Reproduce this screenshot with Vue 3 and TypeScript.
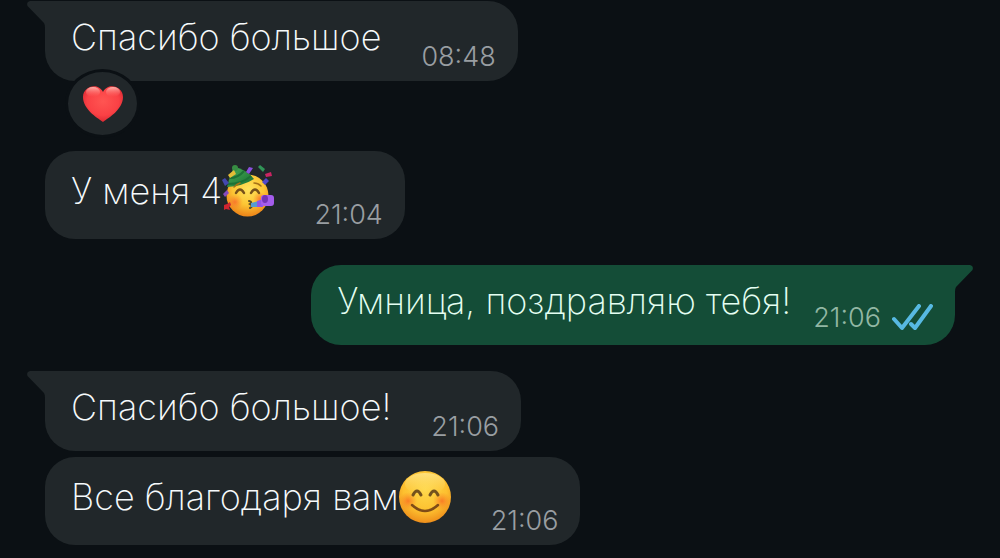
<script setup lang="ts">
type Emoji = 'party' | 'smile'

interface Message {
  id: number
  text: string
  time: string
  sent?: boolean
  tail?: boolean
  emoji?: Emoji
  reaction?: boolean
  follows?: boolean
}

const messages: Message[] = [
  { id: 1, text: 'Спасибо большое', time: '08:48', tail: true, reaction: true },
  { id: 2, text: 'У меня 4', time: '21:04', emoji: 'party' },
  { id: 3, text: 'Умница, поздравляю тебя!', time: '21:06', sent: true, tail: true },
  { id: 4, text: 'Спасибо большое!', time: '21:06', tail: true },
  { id: 5, text: 'Все благодаря вам', time: '21:06', emoji: 'smile', follows: true },
]
</script>

<template>
  <main class="chat">
    <article
      v-for="m in messages"
      :key="m.id"
      class="bubble"
      :class="{ sent: m.sent, tailed: m.tail, reacted: m.reaction, follows: m.follows }"
    >
      <svg v-if="m.tail" class="tail" viewBox="0 0 20 27" aria-hidden="true">
        <path v-if="m.sent" d="M0 0H16Q20 1 18.500 5L2 22Q1 23.500 1 27H0Z" />
        <path v-else d="M20 0H4Q0 1 1.500 5L18 22Q19 23.500 19 27H20Z" />
      </svg>

      <p class="text" :class="{ tall: m.emoji }">
        <span>{{ m.text }}</span>

        <svg v-if="m.emoji === 'party'" class="emoji" viewBox="0 0 52 52" role="img" aria-label="Праздник">
          <defs>
            <radialGradient id="party-face" cx="52%" cy="35%" r="62%">
              <stop offset="0" stop-color="#ffe35c" />
              <stop offset="0.6" stop-color="#fcc534" />
              <stop offset="1" stop-color="#ee8a1b" />
            </radialGradient>
            <radialGradient id="party-blush">
              <stop offset="0" stop-color="#f9692c" stop-opacity="0.8" />
              <stop offset="1" stop-color="#f9832c" stop-opacity="0" />
            </radialGradient>
            <linearGradient id="party-hat" x1="0" y1="0" x2="1" y2="1">
              <stop offset="0" stop-color="#4caf58" />
              <stop offset="1" stop-color="#146b31" />
            </linearGradient>
          </defs>
          <circle cx="25.500" cy="30.500" r="21" fill="url(#party-face)" />
          <circle cx="13" cy="37" r="8" fill="url(#party-blush)" />
          <circle cx="38" cy="34" r="7" fill="url(#party-blush)" />
          <path d="M5 22Q8 10 12 2Q24 4 32 14Q21 21 5 22Z" fill="url(#party-hat)" />
          <path d="M8 13Q16 13 22 6M6 19Q20 19 29 11" fill="none" stroke="#1c7136" stroke-width="2" />
          <circle cx="13" cy="3" r="3" fill="#378d43" />
          <path d="M6 10l6-5 2 4-6 4z" fill="#e3bd37" />
          <path d="M14 28q4-7 8 0M29 28q4-7 8 0" fill="none" stroke="#76511a" stroke-width="2.500" stroke-linecap="round" />
          <path d="M12 22q3-3 6-4M32 18q4 0 7 3" fill="none" stroke="#a57118" stroke-width="1.500" stroke-linecap="round" />
          <path d="M27 36q4 1 1 3q4 2 0 4" fill="none" stroke="#5c4c24" stroke-width="2" stroke-linecap="round" />
          <path d="M29 38L41 35V42L29 42Z" fill="#569bd0" />
          <path d="M35 36L41 34V42L35 42Z" fill="#9253e5" />
          <rect x="39" y="30" width="13" height="11" rx="3" fill="#a45cec" />
          <ellipse cx="43" cy="34" rx="3" ry="4" fill="#7334b6" />
          <path d="M24 7l3-5 4 1-4 6z" fill="#8b50df" />
          <path d="M36 2l2-2 5 4-2 3z" fill="#319557" />
          <path d="M43 9l6-2 1 4-6 1z" fill="#ca2463" />
          <path d="M40 17l4-4 3 3-4 4z" fill="#5148ca" />
          <path d="M0 15l3-2 4 5-4 3z" fill="#4347af" />
          <path d="M1 29l4-4 2 3-4 4z" fill="#874bbd" />
          <path d="M2 40l3-1 3-2 1 3-2 2 1 3-4-1-2 1z" fill="#cf242f" />
        </svg>

        <svg v-if="m.emoji === 'smile'" class="emoji" viewBox="0 0 52 52" role="img" aria-label="Улыбка">
          <defs>
            <radialGradient id="smile-face" cx="50%" cy="36%" r="64%">
              <stop offset="0" stop-color="#ffd84a" />
              <stop offset="0.65" stop-color="#fdc02f" />
              <stop offset="1" stop-color="#ee8e1b" />
            </radialGradient>
            <linearGradient id="smile-shine" x1="0" y1="0" x2="0" y2="1">
              <stop offset="0" stop-color="#fff2ac" stop-opacity="0.6" />
              <stop offset="1" stop-color="#ffe06b" stop-opacity="0" />
            </linearGradient>
            <radialGradient id="smile-blush">
              <stop offset="0" stop-color="#f96b22" stop-opacity="0.8" />
              <stop offset="1" stop-color="#f98322" stop-opacity="0" />
            </radialGradient>
          </defs>
          <circle cx="26" cy="26" r="26" fill="url(#smile-face)" />
          <ellipse cx="26" cy="13" rx="20" ry="11" fill="url(#smile-shine)" />
          <circle cx="9" cy="30" r="9" fill="url(#smile-blush)" />
          <circle cx="43" cy="30" r="9" fill="url(#smile-blush)" />
          <path d="M14 24q4-8 8 0M31 24q4-8 8 0" fill="none" stroke="#75521d" stroke-width="3" stroke-linecap="round" />
          <path d="M13 34Q26 46 39 34" fill="none" stroke="#7f4b17" stroke-width="2.500" stroke-linecap="round" />
        </svg>
      </p>

      <div class="meta">
        <time>{{ m.time }}</time>
        <svg v-if="m.sent" class="ticks" viewBox="0 0 42 28" role="img" aria-label="Прочитано">
          <path d="M3 15L11 24L28 2M20 20L24 24L40 2" />
        </svg>
      </div>

      <button v-if="m.reaction" class="reaction" type="button" aria-label="Реакция: сердце">
        <svg class="heart" viewBox="0 0 42 38" aria-hidden="true">
          <defs>
            <radialGradient id="heart-fill" cx="50%" cy="42%" r="60%">
              <stop offset="0" stop-color="#ff5552" />
              <stop offset="0.65" stop-color="#fa4145" />
              <stop offset="1" stop-color="#d92731" />
            </radialGradient>
            <linearGradient id="heart-shine" x1="0" y1="0" x2="0" y2="1">
              <stop offset="0" stop-color="#ffc0b8" stop-opacity="0.9" />
              <stop offset="1" stop-color="#ff6a65" stop-opacity="0" />
            </linearGradient>
          </defs>
          <path d="M21 37C14 32 1 24 1 12C1 1 16-3 21 7C26-3 41 1 41 12C41 24 28 32 21 37Z" fill="url(#heart-fill)" />
          <ellipse cx="11" cy="7" rx="7" ry="5" fill="url(#heart-shine)" />
          <ellipse cx="31" cy="7" rx="7" ry="5" fill="url(#heart-shine)" />
        </svg>
      </button>
    </article>
  </main>
</template>

<style>
html,
body {
  background: #0b1014;
}
body {
  margin: 0;
}
</style>

<style scoped>
.chat {
  display: flex;
  flex-direction: column;
  align-items: flex-start;
  gap: 26px;
  padding: 1px 45px 13px;
  font-family: Inter, "Noto Sans", sans-serif;
  font-weight: 250;
}
.bubble {
  --fill: #21272a;
  position: relative;
  display: flex;
  align-items: flex-end;
  gap: 40px;
  padding: 12px 22px 8px 26px;
  border-radius: 30px;
  background: var(--fill);
  color: #f6fafc;
}
.bubble.tailed {
  border-top-left-radius: 0;
}
.bubble.reacted {
  margin-bottom: 44px;
}
.bubble.follows {
  margin-top: -20px;
}
.bubble.sent {
  --fill: #144d37;
  align-self: flex-end;
  gap: 22px;
  border-radius: 30px 0 30px 30px;
  color: #e4fff2;
}
.tail {
  position: absolute;
  top: 0;
  left: -19px;
  width: 20px;
  height: 27px;
  fill: var(--fill);
}
.sent .tail {
  left: auto;
  right: -19px;
}
.text {
  display: flex;
  align-items: center;
  margin: 0 0 12px;
  font-size: 36px;
  line-height: 48px;
}
.text.tall {
  line-height: 56px;
}
.emoji {
  flex: none;
  width: 52px;
  height: 52px;
}
.meta {
  display: flex;
  align-items: center;
  gap: 10px;
  color: #999ea2;
  font-size: 27px;
  font-weight: 300;
  line-height: 32px;
}
.sent .meta {
  margin-bottom: 3px;
  color: #92b7a4;
}
.ticks {
  width: 42px;
  height: 28px;
  fill: none;
  stroke: #57b9e2;
  stroke-width: 4;
  stroke-linecap: round;
  stroke-linejoin: round;
}
.reaction {
  position: absolute;
  top: 68px;
  left: 20px;
  display: grid;
  place-items: center;
  width: 75px;
  height: 69px;
  padding: 0;
  border: 3px solid #0b1014;
  border-radius: 50%;
  background: #21272a;
}
.heart {
  width: 42px;
  height: 38px;
}
</style>
